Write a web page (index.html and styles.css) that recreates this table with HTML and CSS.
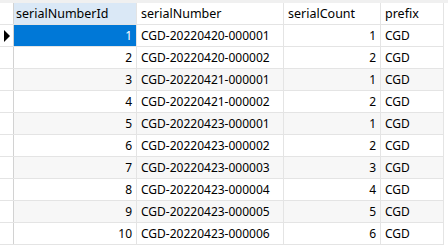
FILE: index.html
```html
<!DOCTYPE html>
<html>
<head>
<meta charset="utf-8">
<link rel="stylesheet" href="styles.css">
</head>
<body>
<div class="band"></div>
<div class="grid">
  <div class="c ind hd"></div>
  <div class="c hd selhd">serialNumberId</div>
  <div class="c hd">serialNumber</div>
  <div class="c hd">serialCount</div>
  <div class="c hd">prefix</div>

  <div class="c ind"><span class="tri"></span></div>
  <div class="c num sel">1</div>
  <div class="c">CGD-20220420-000001</div>
  <div class="c num">1</div>
  <div class="c">CGD</div>

  <div class="c ind"></div>
  <div class="c num">2</div>
  <div class="c">CGD-20220420-000002</div>
  <div class="c num">2</div>
  <div class="c">CGD</div>

  <div class="c ind"></div>
  <div class="c num alt">3</div>
  <div class="c alt">CGD-20220421-000001</div>
  <div class="c num alt">1</div>
  <div class="c alt">CGD</div>

  <div class="c ind"></div>
  <div class="c num">4</div>
  <div class="c">CGD-20220421-000002</div>
  <div class="c num">2</div>
  <div class="c">CGD</div>

  <div class="c ind"></div>
  <div class="c num alt">5</div>
  <div class="c alt">CGD-20220423-000001</div>
  <div class="c num alt">1</div>
  <div class="c alt">CGD</div>

  <div class="c ind"></div>
  <div class="c num">6</div>
  <div class="c">CGD-20220423-000002</div>
  <div class="c num">2</div>
  <div class="c">CGD</div>

  <div class="c ind"></div>
  <div class="c num alt">7</div>
  <div class="c alt">CGD-20220423-000003</div>
  <div class="c num alt">3</div>
  <div class="c alt">CGD</div>

  <div class="c ind"></div>
  <div class="c num">8</div>
  <div class="c">CGD-20220423-000004</div>
  <div class="c num">4</div>
  <div class="c">CGD</div>

  <div class="c ind"></div>
  <div class="c num alt">9</div>
  <div class="c alt">CGD-20220423-000005</div>
  <div class="c num alt">5</div>
  <div class="c alt">CGD</div>

  <div class="c ind"></div>
  <div class="c num">10</div>
  <div class="c">CGD-20220423-000006</div>
  <div class="c num">6</div>
  <div class="c">CGD</div>
</div>
</body>
</html>
```
FILE: styles.css
```css
html, body {
  margin: 0;
  padding: 0;
  background: #ffffff;
}
body {
  width: 448px;
  height: 252px;
  overflow: hidden;
  font-family: "Noto Sans", "Liberation Sans", sans-serif;
  font-size: 12px;
  color: #000;
}
.band {
  height: 3px;
  background: #f0f0f0;
}
.grid {
  display: grid;
  grid-template-columns: 13px 122px 146px 96px 62px;
  grid-auto-rows: 21px;
  gap: 1px;
  width: 443px;
  background: #e4e4e4;
  border-right: 1px solid #e4e4e4;
  border-bottom: 1px solid #e4e4e4;
}
.c {
  background: #ffffff;
  display: flex;
  align-items: center;
  padding: 0 4px;
  white-space: nowrap;
  overflow: hidden;
  line-height: 21px;
}
.hd {
  background: #ffffff;
  font-size: 12.5px;
}
.selhd {
  background: #dae8f6;
  padding-left: 2px;
}
.ind {
  padding: 0;
  justify-content: center;
  box-shadow: 1px 0 0 #d2d2d2;
}
.num {
  justify-content: flex-end;
}
.alt {
  background: #f7f7f7;
}
.sel {
  background: #0078d7;
  color: #ffffff;
}
.tri {
  width: 0;
  height: 0;
  border-top: 6px solid transparent;
  border-bottom: 6px solid transparent;
  border-left: 6px solid #000;
}
```
